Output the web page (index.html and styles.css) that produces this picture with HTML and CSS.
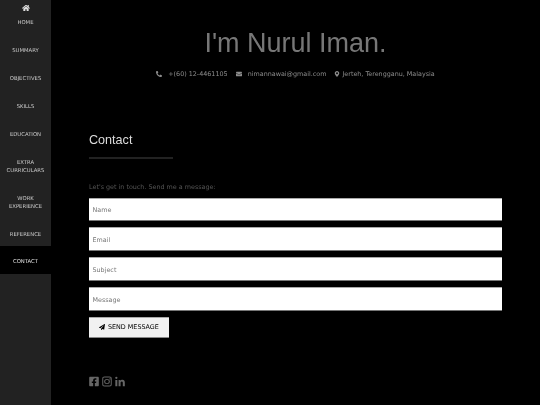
FILE: index.html
```html
<!DOCTYPE html>
<html lang="en">
    <head>
        <meta charset="utf8">
        <title>Nurul Iman</title>
        <link rel="stylesheet" href="styles.css">
    </head>
    <body>
        <nav class="sidebar">
            <a class="nav_item" href="#">
                <svg class="home_icon" viewBox="0 0 576 512"><path fill="currentColor" d="M280 148 96 300v164c0 9 7 16 16 16l112-1c9 0 16-7 16-16v-95c0-9 7-16 16-16h64c9 0 16 7 16 16v95c0 9 7 16 16 16l112 1c9 0 16-7 16-16V300L296 148c-5-4-11-4-16 0zM572 251l-84-69V44c0-7-5-12-12-12h-56c-7 0-12 5-12 12v72l-89-74c-18-14-43-14-61 0L4 251c-5 4-6 12-2 17l26 31c4 5 12 6 17 2L280 107c5-4 11-4 16 0l235 194c5 4 13 3 17-2l26-31c4-5 3-13-2-17z"/></svg>
                HOME
            </a>
            <a class="nav_item" href="#">SUMMARY</a>
            <a class="nav_item" href="#">OBJECTIVES</a>
            <a class="nav_item" href="#">SKILLS</a>
            <a class="nav_item" href="#">EDUCATION</a>
            <a class="nav_item" href="#">EXTRA CURRICULARS</a>
            <a class="nav_item" href="#">WORK EXPERIENCE</a>
            <a class="nav_item" href="#">REFERENCE</a>
            <a class="nav_item active" href="#">CONTACT</a>
        </nav>
        <main class="content">
            <header class="intro">
                <h1>I'm Nurul Iman.</h1>
                <p class="details">
                    <span class="detail">
                        <svg class="detail_icon" viewBox="0 0 512 512"><path fill="currentColor" d="M493 24 389 0c-11-3-23 3-27 14l-48 112c-4 10-1 21 7 28l61 50c-36 76-98 139-175 175l-50-61c-7-8-18-11-28-7L17 359c-11 5-17 16-14 28l24 104c3 11 12 19 24 19 256 0 464-207 464-464 0-11-8-21-22-22z" transform="matrix(-1 0 0 1 512 0)"/></svg>
                        +(60) 12-4461105
                    </span>
                    <span class="detail">
                        <svg class="detail_icon" viewBox="0 0 512 512"><path fill="currentColor" d="M502 191c4-3 10 0 10 5v204c0 27-21 48-48 48H48c-27 0-48-21-48-48V196c0-5 6-8 10-5 22 17 52 39 154 113 21 15 57 48 92 48s72-33 92-48c102-74 132-96 154-113zM256 320c23 0 57-29 73-41 133-97 143-105 174-129 6-5 9-12 9-19v-19c0-27-21-48-48-48H48C21 64 0 85 0 112v19c0 7 3 14 9 19 31 24 41 32 174 129 16 12 50 41 73 41z"/></svg>
                        nimannawai@gmail.com
                    </span>
                    <span class="detail">
                        <svg class="detail_icon pin" viewBox="0 0 384 512"><path fill="currentColor" fill-rule="evenodd" d="M192 0C86 0 0 86 0 192c0 77 27 99 172 309 10 14 30 14 40 0 145-210 172-232 172-309C384 86 298 0 192 0zm0 272a80 80 0 1 1 0-160 80 80 0 0 1 0 160z"/></svg>
                        Jerteh, Terengganu, Malaysia
                    </span>
                </p>
            </header>
            <section class="contact">
                <h2>Contact</h2>
                <hr class="rule">
                <p class="lead">Let's get in touch. Send me a message:</p>
                <form class="contact_form">
                    <input class="field" type="text" placeholder="Name">
                    <input class="field" type="text" placeholder="Email">
                    <input class="field" type="text" placeholder="Subject">
                    <input class="field" type="text" placeholder="Message">
                    <button class="send" type="button">
                        <svg class="send_icon" viewBox="0 0 512 512"><path fill="currentColor" d="M476 3 12 271c-18 10-16 35 2 43l107 45 288-254c6-5 13 3 9 8L176 407v81c0 24 29 33 43 16l64-78 126 53c14 6 31-3 33-19L510 28c4-20-17-35-34-25z"/></svg>
                        SEND MESSAGE
                    </button>
                </form>
            </section>
            <footer class="social">
                <svg class="social_icon" viewBox="0 0 448 512"><path fill="currentColor" d="M400 32H48C22 32 0 54 0 80v352c0 26 22 48 48 48h137V328h-63v-72h63v-55c0-62 37-97 94-97 27 0 56 5 56 5v61h-31c-31 0-41 19-41 39v47h69l-11 72h-58v152h137c26 0 48-22 48-48V80c0-26-22-48-48-48z"/></svg>
                <svg class="social_icon" viewBox="0 0 448 512"><path fill="currentColor" fill-rule="evenodd" d="M224 141a115 115 0 1 0 0 230 115 115 0 0 0 0-230zm0 190a75 75 0 1 1 0-150 75 75 0 0 1 0 150zm146-194a27 27 0 1 1-54 0 27 27 0 0 1 54 0zM130 32C62 32 32 62 32 130v252c0 68 30 98 98 98h188c68 0 98-30 98-98V130c0-68-30-98-98-98H130zm0 40h188c44 0 58 14 58 58v252c0 44-14 58-58 58H130c-44 0-58-14-58-58V130c0-44 14-58 58-58z" transform="matrix(1.15 0 0 1.02 -34 -5)"/></svg>
                <svg class="social_icon" viewBox="0 0 448 512"><path fill="currentColor" d="M100 480H7V181h93v299zM54 140C24 140 0 115 0 85a54 54 0 0 1 107 0c0 30-24 55-53 55zm394 340h-93V334c0-35-1-79-48-79-48 0-56 38-56 77v148h-93V181h89v41h1c12-24 43-48 88-48 94 0 112 62 112 142v164z"/></svg>
            </footer>
        </main>
    </body>
</html>
```

FILE: styles.css
```css
body {
    display: flex;
    margin: 0;
    height: 405px;
    overflow: hidden;
    background-color: #000;
    font-family: "DejaVu Sans", sans-serif;
}
.sidebar {
    flex: none;
    width: 51px;
    background-color: #222;
    font-size: 5.3px;
    line-height: 7.9px;
    text-align: center;
    filter: blur(0.25px);
}
.nav_item {
    display: block;
    padding: 12px 2px 8px;
    color: #ccc;
    text-decoration: none;
}
.nav_item:first-child {
    padding: 2.4px 2px 8px;
}
.active {
    background-color: #000;
    color: #e4e4e4;
}
.home_icon {
    display: block;
    width: 8px;
    height: 8px;
    margin: 2px auto 7px;
    color: #ddd;
}
.content {
    flex: 1;
    padding: 0 38px;
    min-width: 0;
    filter: blur(0.25px);
}
.intro {
    text-align: center;
    color: #777;
}
.intro h1 {
    margin: 0;
    padding-top: 25px;
    font-family: "Liberation Sans", sans-serif;
    font-size: 27px;
    font-weight: 400;
    line-height: 37px;
}
.details {
    display: flex;
    justify-content: center;
    gap: 8px;
    margin: 8px 0 0;
    font-size: 6.4px;
    line-height: 9px;
    color: #8c8c8c;
}
.detail_icon {
    width: 6px;
    height: 6px;
    margin-right: 4px;
    vertical-align: -1px;
}
.pin {
    margin-right: 0;
}
.contact {
    margin-top: 53px;
}
.contact h2 {
    margin: 0;
    font-family: "Liberation Sans", sans-serif;
    font-size: 12.6px;
    font-weight: 400;
    line-height: 17px;
    color: #ddd;
}
.rule {
    width: 84px;
    height: 2px;
    margin: 8px 0 0;
    border: 0;
    background-color: #222;
}
.lead {
    margin: 24px 0 0;
    font-size: 6.4px;
    line-height: 9px;
    color: #555;
}
.contact_form {
    display: flex;
    flex-direction: column;
    align-items: flex-start;
    gap: 6px;
    margin-top: 5.5px;
}
.field {
    box-sizing: border-box;
    width: 100%;
    height: 23.9px;
    padding: 1px 4px 0 3.5px;
    border: 0;
    border-top: 1px solid #aaa;
    border-bottom: 1px solid #777;
    background-color: #fff;
    font-family: "DejaVu Sans", sans-serif;
    font-size: 6.4px;
}
.field::placeholder {
    color: #777;
}
.send {
    display: flex;
    align-items: center;
    gap: 3px;
    width: 80px;
    height: 20.5px;
    padding: 0 10px;
    border: 0;
    border-top: 1px solid #aaa;
    border-bottom: 1px solid #888;
    background-color: #f1f1f1;
    font-family: "DejaVu Sans", sans-serif;
    font-size: 6.4px;
    color: #000;
    white-space: nowrap;
}
.send_icon {
    flex: none;
    width: 6px;
    height: 6px;
}
.social {
    display: flex;
    gap: 3px;
    margin: 38.5px 0 0 -0.5px;
    color: #666;
}
.social_icon {
    width: 10px;
    height: 11px;
}
```
